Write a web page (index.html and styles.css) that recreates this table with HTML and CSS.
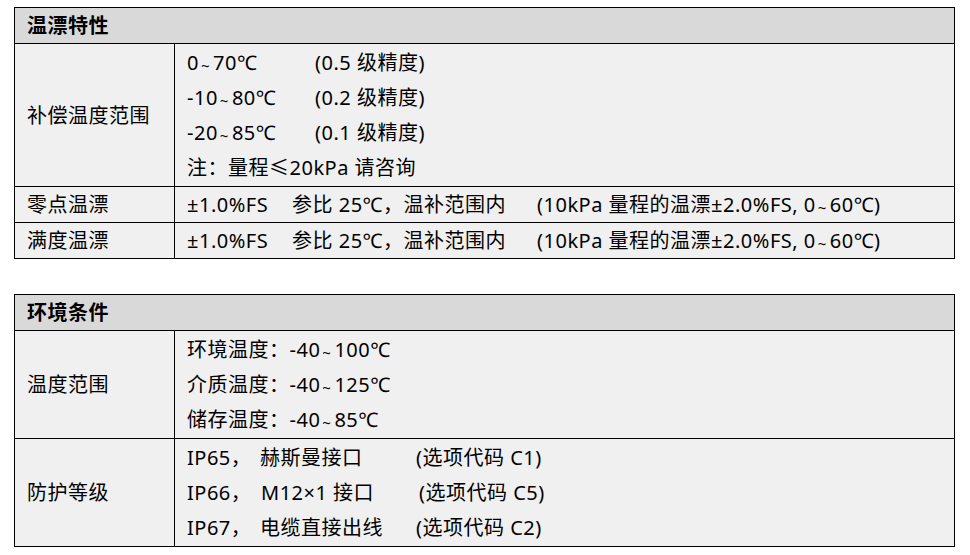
FILE: index.html
```html
<!DOCTYPE html>
<html lang="zh-CN">
<head>
<meta charset="utf-8">
<title>温漂特性 / 环境条件</title>
<link rel="stylesheet" href="styles.css">
</head>
<body>
<div class="page">
  <table class="spec">
    <colgroup><col class="col-name"><col class="col-val"></colgroup>
    <tr class="head"><th colspan="2">温漂特性</th></tr>
    <tr>
      <td class="name">补偿温度范围</td>
      <td class="val multi">
        <div><span class="a1">0<span class="tl">~</span>70℃</span>(0.5 级精度)</div>
        <div><span class="a1">-10<span class="tl">~</span>80℃</span>(0.2 级精度)</div>
        <div><span class="a1">-20<span class="tl">~</span>85℃</span>(0.1 级精度)</div>
        <div>注：量程≤20kPa 请咨询</div>
      </td>
    </tr>
    <tr>
      <td class="name">零点温漂</td>
      <td class="val"><span class="b1">±1.0%FS</span><span class="b2">参比 25℃，温补范围内</span>(10kPa 量程的温漂±2.0%FS, 0<span class="tl">~</span>60℃)</td>
    </tr>
    <tr>
      <td class="name">满度温漂</td>
      <td class="val"><span class="b1">±1.0%FS</span><span class="b2">参比 25℃，温补范围内</span>(10kPa 量程的温漂±2.0%FS, 0<span class="tl">~</span>60℃)</td>
    </tr>
  </table>

  <table class="spec">
    <colgroup><col class="col-name"><col class="col-val"></colgroup>
    <tr class="head"><th colspan="2">环境条件</th></tr>
    <tr>
      <td class="name">温度范围</td>
      <td class="val multi">
        <div>环境温度：-40<span class="tl">~</span>100℃</div>
        <div>介质温度：-40<span class="tl">~</span>125℃</div>
        <div>储存温度：-40<span class="tl">~</span>85℃</div>
      </td>
    </tr>
    <tr>
      <td class="name">防护等级</td>
      <td class="val multi">
        <div><span class="c1">IP65，</span><span class="c2">赫斯曼接口</span>(选项代码 C1)</div>
        <div><span class="c1">IP66，</span><span class="c2 shift">M12×1 接口</span>(选项代码 C5)</div>
        <div><span class="c1">IP67，</span><span class="c2">电缆直接出线</span>(选项代码 C2)</div>
      </td>
    </tr>
  </table>
</div>
</body>
</html>
```

FILE: styles.css
```css
html, body {
  margin: 0;
  padding: 0;
  background: #ffffff;
}

.page {
  padding: 7px 0 0 14px;
  display: flex;
  flex-direction: column;
  gap: 35px;
  font-family: "Noto Sans", "Noto Sans CJK SC", sans-serif;
  font-size: 20px;
  letter-spacing: 0.5px;
  color: #000;
}

.spec {
  width: 941px;
  border-collapse: collapse;
  border: 1px solid #000;
  table-layout: fixed;
}

.col-name { width: 160px; }

.spec th,
.spec td {
  border: 1px solid #000;
  padding: 0 12px;
  line-height: 35px;
  height: 35px;
  text-align: left;
  vertical-align: middle;
}

.head th {
  background: #d9d9d9;
  font-weight: 700;
}

.spec td {
  background: #f0f0f0;
  white-space: nowrap;
}

.spec td.multi {
  padding-top: 1px;
  padding-bottom: 1px;
}

.tl {
  font-size: 15px;
  line-height: 1;
  margin: 0 3px 0 2px;
  position: relative;
  top: 1px;
}

.a1 { display: inline-block; width: 128px; }
.b1 { display: inline-block; width: 105px; }
.b2 { display: inline-block; width: 245px; }
.c1 { display: inline-block; width: 73px; }
.c2 { display: inline-block; width: 156px; }
.c2.shift { margin-left: 1px; width: 158px; }
```
